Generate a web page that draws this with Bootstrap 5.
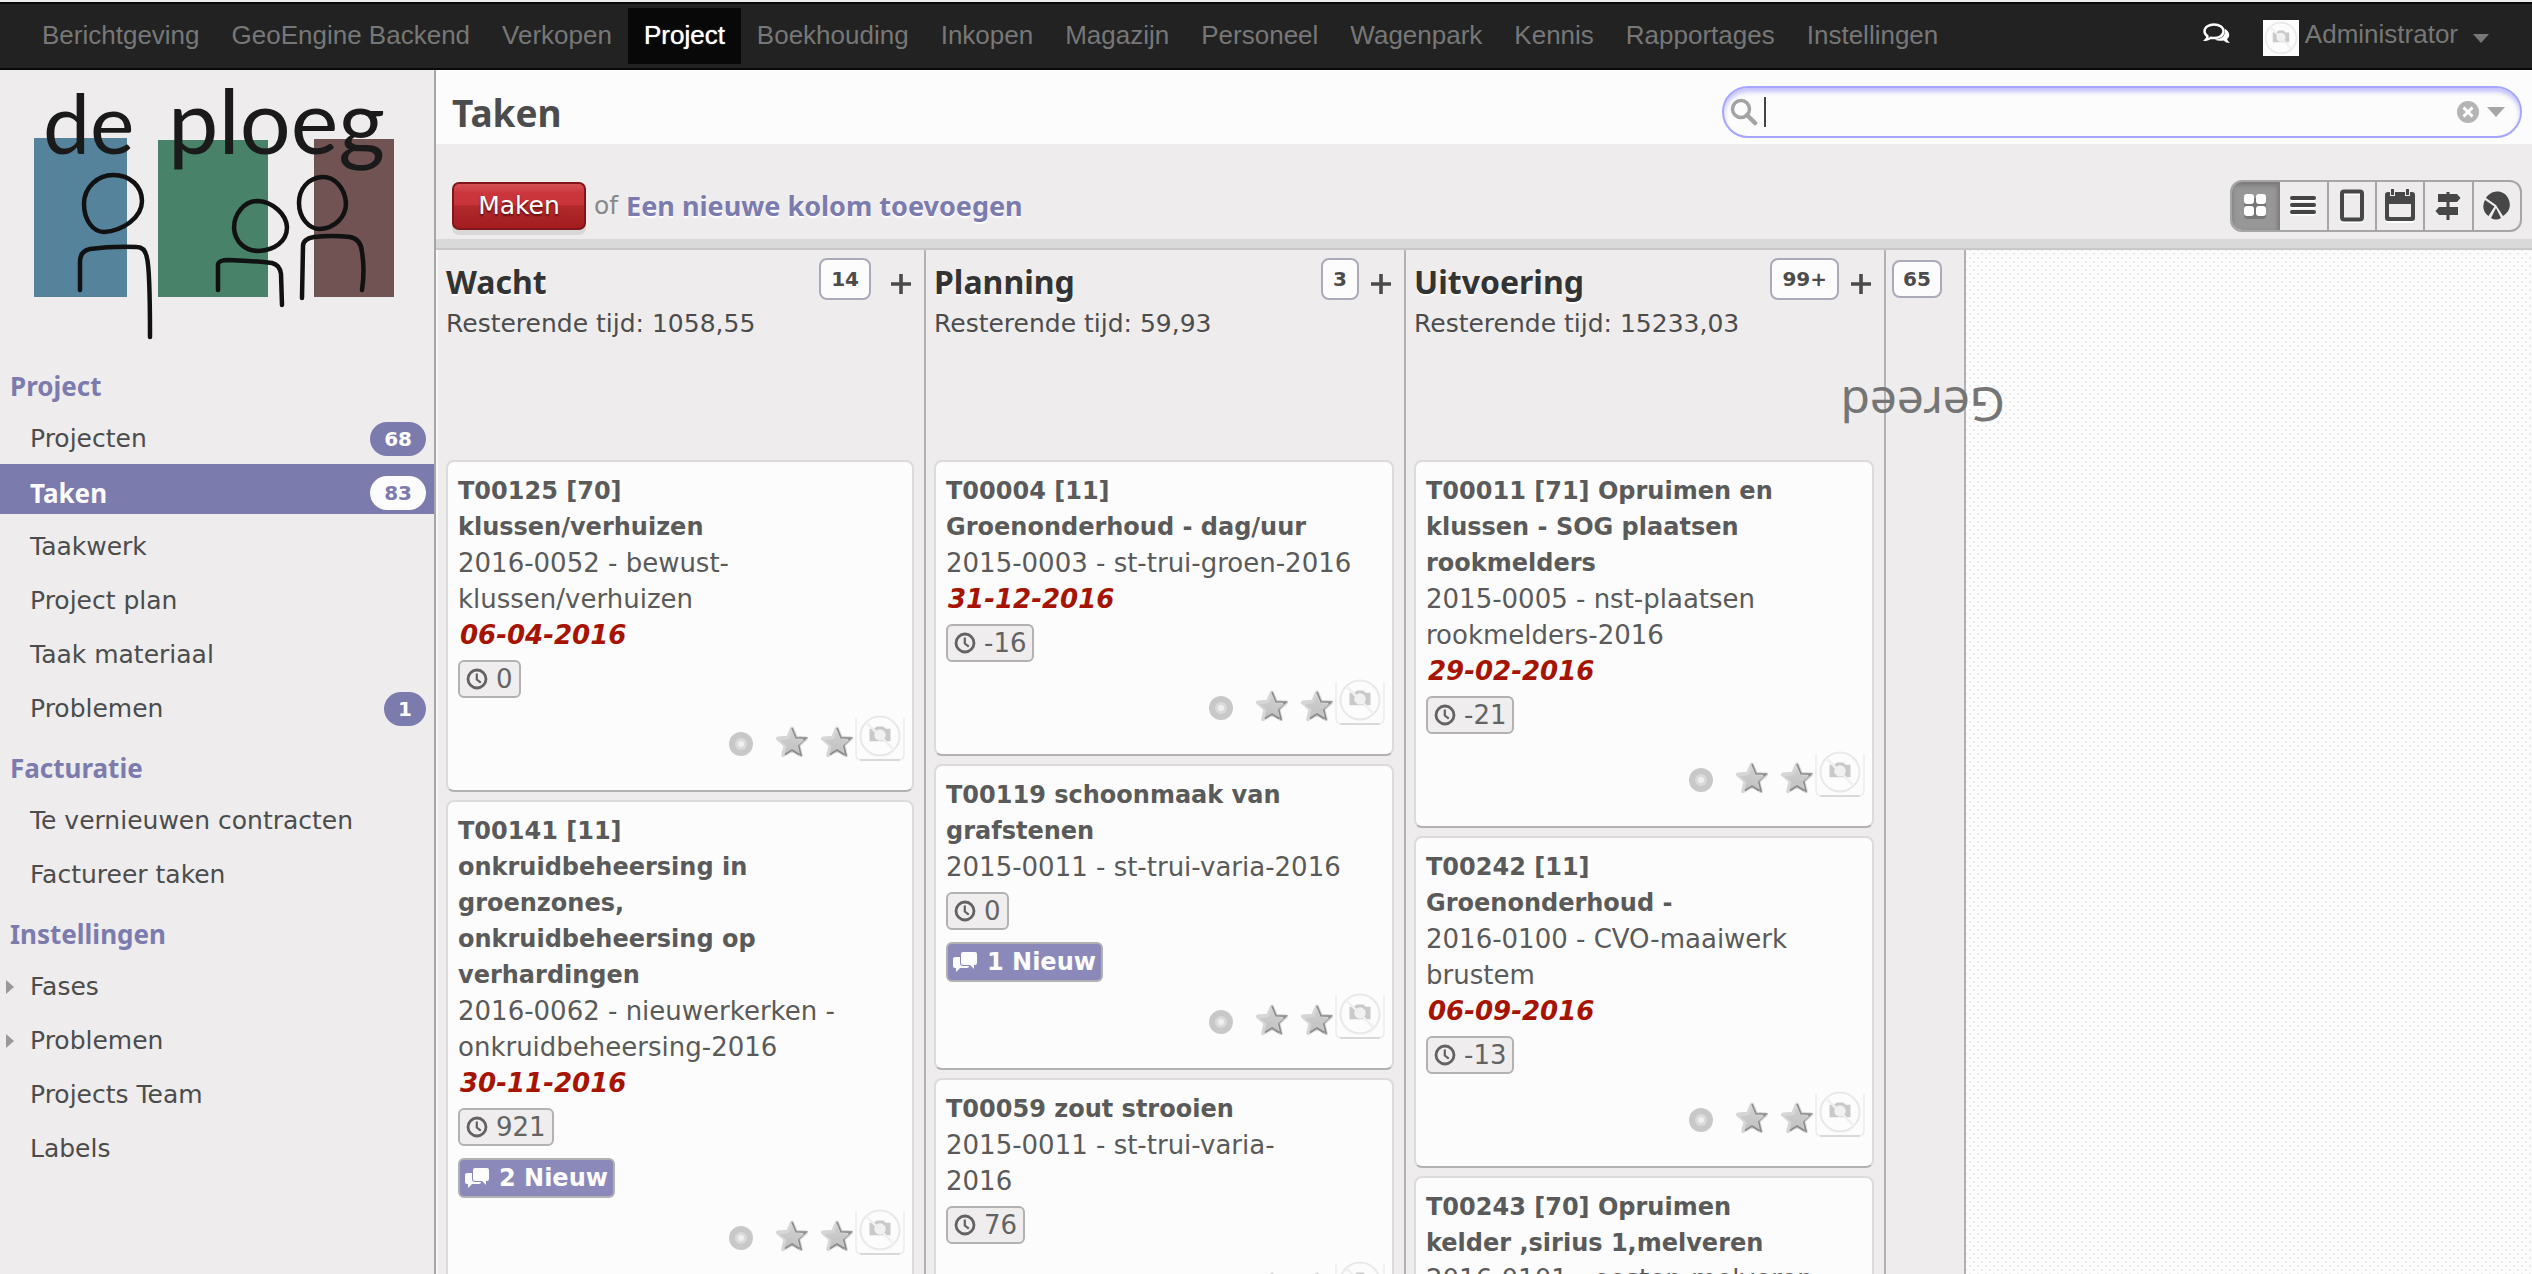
<!DOCTYPE html>
<html lang="nl">
<head>
<meta charset="utf-8">
<meta name="viewport" content="width=device-width, initial-scale=1">
<title>Taken</title>
<link href="https://cdn.jsdelivr.net/npm/bootstrap@5.3.0/dist/css/bootstrap.min.css" rel="stylesheet">
<style>
  :root{--ui:"DejaVu Sans",sans-serif;--head:"Noto Sans",sans-serif;--accent:#7c7bad;--panel:#eeeced;--paper:#fcfcfc;--ink:#4c4c4c}
  body{font-family:var(--ui);font-size:25px;line-height:36px;color:var(--ink);background:var(--panel)}
  .shell{height:100vh;overflow:hidden}
  a{text-decoration:none}

  .topnav{background:#222;border-top:2px solid #080808;border-bottom:2px solid #080808;height:68px;margin-top:2px;font-family:"Liberation Sans",sans-serif;font-size:26px;line-height:56px;padding:0 42px 0 26px;flex:none}
  .topnav .navbar-nav .nav-link{color:#777;padding:0 16px;height:56px;line-height:54px}
  .topnav .navbar-nav .nav-link.active{background:#080808;color:#fff;text-shadow:0 0 1px #fff}
  .userbtn{color:#777;gap:6px;line-height:52px}
  .userpic{width:36px;height:36px;background:var(--paper);margin-top:8px}
  .iconbtn{background:none;border:0;padding:0;line-height:0;color:inherit}

  .side{width:436px;border-right:2px solid #a6a6a6;flex:none}
  .side .logo{overflow:visible}
  .side h2{font-family:var(--head);font-weight:700;font-size:26px;line-height:36px;color:var(--accent);margin:0;padding:20px 0 2px 10px}
  .side .nav-link{color:var(--ink);margin-top:4px;padding:8px 8px 0 30px;height:50px;line-height:42px;font-size:25px}
  .side .nav-link.active{background:var(--accent);color:var(--paper);font-family:var(--head);font-weight:700;font-size:26px}
  .side .pill{font:700 20px/34px var(--ui);height:34px;padding:0 14px;border-radius:17px;background:var(--accent);color:#fff;margin-top:4px}
  .side .active .pill{background:var(--paper);color:var(--accent)}
  .side .twist{padding-left:6px}
  .side .twist svg{margin:0 16px 0 0}

  .titlebar{background:var(--paper);height:74px;padding:0 10px 0 16px;flex:none}
  .titlebar h1{font:700 37px/74px var(--head);margin:0;padding-top:6px;height:74px;line-height:74px}
  .searchbox{width:800px;height:52px;border:2px solid #a6a6fe;border-radius:26px;box-shadow:inset 0 4px 4px #c4c3fb;padding:0 15px 0 6px;margin-top:10px;background:var(--paper)}
  .searchbox input{border:0;border-left:2px solid #444;background:none;height:30px;outline:0;margin-left:6px}
  .toolbar{height:95px;padding:28px 10px 0 16px;flex:none}
  .strip{height:11px;background:#d9d9d9;border-bottom:2px solid #c9c8c9;flex:none}
  .maken{width:134px;height:48px;font-size:25px;line-height:40px;color:#fff;padding:0;border:2px solid #80161a;border-radius:7px;background:linear-gradient(#d45054,#ca343b 22%,#c9343a 47%,#b02a2c 50%,#a31c20);box-shadow:0 5px 0 #d9d8d9;text-shadow:0 2px 2px #601010}
  .toolbar .or{color:#888}
  .toolbar .addcol{font:700 27px/36px var(--head);color:var(--accent);text-shadow:0 2px 0 #fff}
  .viewset{border:2px solid #a6a6a6;border-radius:12px;overflow:hidden;height:52px;width:292px}
  .viewset button{flex:1 1 0;border:0;border-right:2px solid #a6a6a6;background:none;padding:0;line-height:0;color:#474747}
  .viewset button:last-child{border-right:0}
  .viewset button.active{background:#979797;box-shadow:inset 0 3px 5px #777;border-right-color:#808080}

  .board{background-color:var(--paper);background-image:conic-gradient(from 270deg at 2px 2px,#eaeaea 90deg,transparent 0),conic-gradient(from 270deg at 2px 2px,#eaeaea 90deg,transparent 0);background-size:8px 8px;background-position:5px 7px,1px 3px;overflow:hidden}
  .stage{width:480px;background:var(--panel);border-right:2px solid #b3b2b3;padding:0 10px 0 8px;flex:none}
  .stage.first{width:490px;padding-left:10px;box-shadow:inset 2px 0 0 #f8f8f8}
  .stage.folded{width:80px;padding:10px 6px}
  .stagehead{height:210px;padding:6px 3px 0 0}
  .stagehead h3{font:700 32px/36px var(--head);color:#333;text-shadow:0 2px 0 #fff;margin:0;padding-top:8px;height:50px}
  .tally{font:700 20px/34px var(--ui);border:2px solid #aaaab8;border-radius:8px;background:var(--paper);padding:0 10px;height:42px;line-height:38px;margin-top:2px}
  .folded .tally{height:38px;line-height:34px;margin:0;padding:0 9px;display:inline-block}
  .plus{margin:18px 0 0 12px}
  .first .plus{margin-left:20px}
  .vtitle{font:48px/50px var(--head);color:#757575;transform:rotate(180deg);width:164px;margin:82px 0 0 -51px}

  .task{border:2px solid #dcdbdc;border-bottom-color:#b3b2b3;border-radius:8px;background:var(--paper);padding:11px 7px 28px 10px;margin-bottom:8px;font-size:26px;color:#5a5a5a;white-space:nowrap}
  .task strong{font-size:24px}
  .task .due{font-size:26px;font-weight:700;font-style:italic;color:#a61300;padding-left:2px}
  .tags{gap:12px;padding-top:7px}
  .hours{border:2px solid #b3b2b3;border-radius:6px;background:#efedee;height:38px;padding:0 6px;gap:8px;line-height:38px;color:#636363}
  .hours:last-child{margin-bottom:6px}
  .fresh{border:2px solid #b1b0b3;border-radius:6px;background:#8a89ba;height:40px;padding:0 5px;gap:10px;color:var(--paper);font-weight:700;font-size:24px}
  .marks{margin-top:11px;height:47px}
  .marks .dot{margin:0 23px 6px 0}
  .marks .star{margin:0 13px 4px 0}
  .marks .star:nth-child(3){margin-right:2px}
</style>
<script src="https://cdn.jsdelivr.net/npm/bootstrap@5.3.0/dist/js/bootstrap.bundle.min.js"></script>
</head>
<body>
<svg width="0" height="0" class="position-absolute" aria-hidden="true">
  <defs>
    <linearGradient id="starfill" x1="0" y1="0" x2="0" y2="1"><stop offset="0" stop-color="#d0d0d0"/><stop offset="1" stop-color="#c0c0c0"/></linearGradient>
  </defs>
  <symbol id="clock" viewBox="0 0 22 22"><circle cx="11" cy="11" r="9" fill="none" stroke="#636363" stroke-width="2.8"/><path d="M10.8 5.5v6l4 3.2" fill="none" stroke="#636363" stroke-width="2.2"/></symbol>
  <symbol id="dot" viewBox="0 0 24 24"><circle cx="12" cy="12" r="12" fill="#c8c8c8"/><circle cx="12" cy="12" r="6" fill="#dadada"/><circle cx="12" cy="12" r="3" fill="#f0f0f0"/></symbol>
  <symbol id="star" viewBox="0 0 32 32"><path d="M16 2.500l4 9.300 10 .8-7.600 6.600 2.400 9.900L16 23.800l-8.800 5.300 2.400-9.900L2 12.600l10-.8z" fill="#a4a4a4" stroke="#d6d6d6" stroke-width="4" stroke-linejoin="round"/><path d="M16 2l4 9.800 10 .3-7.400 7 2.400 9.900L16 23.800" fill="none" stroke="#8a8a8a" stroke-width="1.600"/><path d="M16 5l3.400 8.500 8.900.7-6.800 5.900 2.100 8.900L16 24.100 8.400 29l2.100-8.900-6.800-5.900 8.900-.7z" fill="url(#starfill)"/><path d="M9 28.500l7-4.500 7 4.500" fill="none" stroke="#8a8a8a" stroke-width="1.500"/></symbol>
  <symbol id="nopic" viewBox="0 0 44 44"><path d="M11 14.500h5l2.500-2.500h7l2.500 2.500h5v13H11z" fill="#c9c9c9"/><circle cx="22" cy="21" r="6" fill="#f1f1f1"/><circle cx="22" cy="22" r="20.500" fill="none" stroke="#e9e9e9" stroke-width="2.200"/><path d="M7.500 7.500l29 29" stroke="#f0f0f0" stroke-width="2.600"/></symbol>
  <symbol id="face" viewBox="0 0 50 47"><path d="M1 3v36q0 6 5 6h38q5 0 5-6V3" fill="none" stroke="#ebebeb" stroke-width="1.500"/><path d="M5 45h40" stroke="#d2d2d2" stroke-width="1.500"/><use href="#nopic" x="4" y="0" width="42" height="42"/></symbol>
  <symbol id="talk" viewBox="0 0 24 22"><path d="M10 1h12q2 0 2 2v9q0 2-2 2h-1v4l-4-4h-7q-2 0-2-2V3q0-2 2-2z" fill="#fcfcfc"/><path d="M7 6H2Q0 6 0 8v7q0 2 2 2h1v4l4-4h7q2 0 2-2h-6q-3 0-3-3z" fill="#fcfcfc"/></symbol>
  <symbol id="plus" viewBox="0 0 20 20"><path d="M10 0v20M0 10h20" stroke="#4a4a4a" stroke-width="3.600"/></symbol>
</svg>

<div class="shell d-flex flex-column">
  <nav class="topnav navbar navbar-expand d-flex align-items-start flex-nowrap" aria-label="Hoofdmenu">
    <div class="navbar-nav me-auto pt-1">
      <a class="nav-link" href="#">Berichtgeving</a><a class="nav-link" href="#">GeoEngine Backend</a><a class="nav-link" href="#">Verkopen</a><a class="nav-link active" aria-current="page" href="#">Project</a><a class="nav-link" href="#">Boekhouding</a><a class="nav-link" href="#">Inkopen</a><a class="nav-link" href="#">Magazijn</a><a class="nav-link" href="#">Personeel</a><a class="nav-link" href="#">Wagenpark</a><a class="nav-link" href="#">Kennis</a><a class="nav-link" href="#">Rapportages</a><a class="nav-link" href="#">Instellingen</a>
    </div>
    <div class="d-flex align-items-center pt-1">
      <button class="iconbtn me-4" type="button" aria-label="Berichten"><svg width="28" height="24" viewBox="0 0 28 24"><path d="M21.500 6.500c4 2 7 7 2.500 10.500q.5 2 3 4-4 0-6.500-2.500-5 1-9-1c7-.5 12-4 10-11z" fill="#fff"/><path d="M11 2.500c5 0 9.500 2.700 9.500 6.800S16 16 11 16q-1.500 0-3-.3-2 1.800-5 2 1.500-1.500 1.500-3.500C2.500 13 1.500 11.200 1.500 9.300 1.500 5.200 6 2.500 11 2.500z" fill="#222" stroke="#fff" stroke-width="2.400"/></svg></button>
      <a class="userbtn d-flex align-items-center ms-2" href="#"><span class="userpic d-flex"><svg width="36" height="36" viewBox="-2 -2 48 48"><use href="#nopic" width="44" height="44"/></svg></span>Administrator<svg class="ms-2 mt-2" width="18" height="9" viewBox="0 0 18 9"><path d="M1 0h16L9 9z" fill="#777"/></svg></a>
    </div>
  </nav>

  <div class="d-flex flex-grow-1 overflow-hidden">
    <aside class="side">
      <svg class="logo d-block" width="434" height="278" viewBox="0 0 434 278" role="img" aria-label="de ploeg">
        <rect x="34" y="68" width="93" height="159" fill="#55839b"/><rect x="158" y="70" width="110" height="157" fill="#478269"/><rect x="314" y="69" width="80" height="158" fill="#705352"/>
        <g font-family="Lato, sans-serif" font-weight="400" font-size="84" fill="#1a1a1a"><text x="43" y="84">de</text><text x="168" y="84" font-size="90">ploeg</text></g>
        <g fill="none" stroke="#111" stroke-width="4.500" stroke-linecap="round">
          <path d="M113 105C98 105 84 117 84 134C84 150 93 162 104 162C122 161 142 148 142 131C142 117 131 105 113 105z"/>
          <path d="M80 220V192Q80 181 90 179Q112 176 137 177Q145 177 147 188Q150 200 150 267"/>
          <path d="M258 131C244 131 234 144 234 158C235 172 245 181 259 181C274 180 287 172 287 157C286 144 273 132 258 131z"/>
          <path d="M218 220V194Q219 190 229 190Q255 191 272 193Q280 195 281 204L282 235"/>
          <path d="M322 107C308 108 299 119 299 133C299 148 309 159 320 159C335 158 346 147 346 133C345 118 334 106 322 107z"/>
          <path d="M302 228L303 176Q303 169 314 167Q332 165 350 167Q361 169 362 182Q365 200 362 220"/>
        </g>
      </svg>
      <h2>Project</h2>
      <nav class="nav flex-column flex-nowrap" aria-label="Project">
        <a class="nav-link d-flex justify-content-between" href="#">Projecten<span class="pill">68</span></a>
        <a class="nav-link d-flex justify-content-between active" aria-current="page" href="#">Taken<span class="pill">83</span></a>
        <a class="nav-link" href="#">Taakwerk</a><a class="nav-link" href="#">Project plan</a><a class="nav-link" href="#">Taak materiaal</a>
        <a class="nav-link d-flex justify-content-between" href="#">Problemen<span class="pill">1</span></a>
      </nav>
      <h2>Facturatie</h2>
      <nav class="nav flex-column flex-nowrap" aria-label="Facturatie"><a class="nav-link" href="#">Te vernieuwen contracten</a><a class="nav-link" href="#">Factureer taken</a></nav>
      <h2>Instellingen</h2>
      <nav class="nav flex-column flex-nowrap" aria-label="Instellingen">
        <a class="nav-link twist d-flex align-items-center" href="#"><svg width="8" height="14" viewBox="0 0 8 14"><path d="M0 0l8 7-8 7z" fill="#999"/></svg>Fases</a>
        <a class="nav-link twist d-flex align-items-center" href="#"><svg width="8" height="14" viewBox="0 0 8 14"><path d="M0 0l8 7-8 7z" fill="#999"/></svg>Problemen</a>
        <a class="nav-link" href="#">Projects Team</a><a class="nav-link" href="#">Labels</a>
      </nav>
    </aside>

    <main class="d-flex flex-column flex-grow-1 overflow-hidden">
      <header class="titlebar d-flex justify-content-between align-items-center">
        <h1>Taken</h1>
        <form class="searchbox d-flex align-items-center" role="search">
          <svg width="28" height="28" viewBox="0 0 28 28"><circle cx="11" cy="11" r="8.500" fill="none" stroke="#a3a3a3" stroke-width="3.500"/><path d="M17 17l8 8" stroke="#a3a3a3" stroke-width="4.500" stroke-linecap="round"/></svg>
          <input class="flex-grow-1" type="text" aria-label="Zoeken">
          <button class="iconbtn" type="button" aria-label="Wissen"><svg width="22" height="22" viewBox="0 0 22 22"><circle cx="11" cy="11" r="11" fill="#b5b5b5"/><path d="M6.500 6.500l9 9M15.500 6.500l-9 9" stroke="#fff" stroke-width="3"/></svg></button>
          <button class="iconbtn ms-2" type="button" aria-label="Geavanceerd zoeken"><svg width="18" height="10" viewBox="0 0 18 10"><path d="M0 0h18l-9 10z" fill="#a6a6a6"/></svg></button>
        </form>
      </header>
      <div class="toolbar d-flex justify-content-between align-items-center">
        <div class="d-flex align-items-center">
          <button class="maken btn" type="button">Maken</button>
          <span class="or mx-2">of</span><a class="addcol" href="#">Een nieuwe kolom toevoegen</a>
        </div>
        <div class="viewset d-flex" role="group" aria-label="Weergave">
          <button class="active" type="button" aria-label="Kanban"><svg width="26" height="26" viewBox="0 0 26 26"><g fill="#777" transform="translate(0 3)"><rect x="2" y="2" width="22" height="21" rx="4"/></g><g fill="#fff"><rect x="2" y="1" width="10" height="10" rx="3"/><rect x="14" y="1" width="10" height="10" rx="3"/><rect x="2" y="13" width="10" height="10" rx="3"/><rect x="14" y="13" width="10" height="10" rx="3"/></g></svg></button>
          <button type="button" aria-label="Lijst"><svg width="26" height="22" viewBox="0 0 26 22"><path d="M1 4.500h24M1 11.500h24M1 18.500h24" stroke="#fff" stroke-width="4"/><path d="M2 3h22M2 10h22M2 17h22" stroke="#444" stroke-width="4" stroke-linecap="round"/></svg></button>
          <button type="button" aria-label="Formulier"><svg width="26" height="34" viewBox="0 0 26 34"><rect x="3" y="4" width="20" height="28" rx="2" fill="none" stroke="#fff" stroke-width="4"/><rect x="3" y="2.500" width="20" height="28" rx="2" fill="none" stroke="#474747" stroke-width="4"/></svg></button>
          <button type="button" aria-label="Kalender"><svg width="32" height="34" viewBox="0 0 32 34"><path d="M2 33h28" stroke="#fff" stroke-width="2"/><path d="M7 0h3v6H7zM22 0h3v6h-3z" fill="#474747"/><path d="M4 3h2v4h5V3h10v4h5V3h2q3 0 3 3v23q0 3-3 3H4q-3 0-3-3V6q0-3 3-3zM5 15v12q0 1 1 1h20q1 0 1-1V15z" fill-rule="evenodd" fill="#474747"/></svg></button>
          <button type="button" aria-label="Gantt"><svg width="26" height="30" viewBox="0 0 26 30" fill="#474747"><path d="M11.500 1h3v28h-3z"/><path d="M3 3h19l3.500 4L22 11H3zM23 16H4L.5 20 4 24h19z"/></svg></button>
          <button type="button" aria-label="Grafiek"><svg width="30" height="32" viewBox="0 0 30 32" fill="#474747"><path d="M14 15L4 8C10-1 22 0 26 8c4 8 1 14-5 18z"/><path d="M12.500 16.500L3 10C0 16 1 22 6.500 26zM14 18l-5 10q5 3 10 0z"/></svg></button>
        </div>
      </div>
      <div class="strip"></div>

      <div class="board d-flex flex-grow-1">
        <section class="stage first">
          <div class="stagehead">
            <div class="d-flex align-items-start"><h3 class="me-auto">Wacht</h3><span class="tally">14</span><button class="iconbtn plus" type="button" aria-label="Toevoegen aan Wacht"><svg width="20" height="20"><use href="#plus"/></svg></button></div>
            <div class="remain">Resterende tijd: 1058,55</div>
          </div>
          <article class="card task"><strong>T00125 [70]<br>klussen/verhuizen</strong><div>2016-0052 - bewust-<br>klussen/verhuizen</div><div class="due">06-04-2016</div>
            <div class="tags d-flex flex-column align-items-start"><span class="hours d-flex align-items-center"><svg width="22" height="22"><use href="#clock"/></svg>0</span></div>
            <div class="marks d-flex justify-content-end align-items-end"><button class="iconbtn dot" type="button" aria-label="Status"><svg width="24" height="24"><use href="#dot"/></svg></button><button class="iconbtn star" type="button" aria-label="Prioriteit 1"><svg width="32" height="32"><use href="#star"/></svg></button><button class="iconbtn star" type="button" aria-label="Prioriteit 2"><svg width="32" height="32"><use href="#star"/></svg></button><svg width="50" height="47"><use href="#face"/></svg></div></article>
          <article class="card task"><strong>T00141 [11]<br>onkruidbeheersing in<br>groenzones,<br>onkruidbeheersing op<br>verhardingen</strong><div>2016-0062 - nieuwerkerken -<br>onkruidbeheersing-2016</div><div class="due">30-11-2016</div>
            <div class="tags d-flex flex-column align-items-start"><span class="hours d-flex align-items-center"><svg width="22" height="22"><use href="#clock"/></svg>921</span><span class="fresh d-flex align-items-center"><svg width="24" height="22"><use href="#talk"/></svg>2 Nieuw</span></div>
            <div class="marks d-flex justify-content-end align-items-end"><button class="iconbtn dot" type="button" aria-label="Status"><svg width="24" height="24"><use href="#dot"/></svg></button><button class="iconbtn star" type="button" aria-label="Prioriteit 1"><svg width="32" height="32"><use href="#star"/></svg></button><button class="iconbtn star" type="button" aria-label="Prioriteit 2"><svg width="32" height="32"><use href="#star"/></svg></button><svg width="50" height="47"><use href="#face"/></svg></div></article>
        </section>

        <section class="stage">
          <div class="stagehead">
            <div class="d-flex align-items-start"><h3 class="me-auto">Planning</h3><span class="tally">3</span><button class="iconbtn plus" type="button" aria-label="Toevoegen aan Planning"><svg width="20" height="20"><use href="#plus"/></svg></button></div>
            <div class="remain">Resterende tijd: 59,93</div>
          </div>
          <article class="card task"><strong>T00004 [11]<br>Groenonderhoud - dag/uur</strong><div>2015-0003 - st-trui-groen-2016</div><div class="due">31-12-2016</div>
            <div class="tags d-flex flex-column align-items-start"><span class="hours d-flex align-items-center"><svg width="22" height="22"><use href="#clock"/></svg>-16</span></div>
            <div class="marks d-flex justify-content-end align-items-end"><button class="iconbtn dot" type="button" aria-label="Status"><svg width="24" height="24"><use href="#dot"/></svg></button><button class="iconbtn star" type="button" aria-label="Prioriteit 1"><svg width="32" height="32"><use href="#star"/></svg></button><button class="iconbtn star" type="button" aria-label="Prioriteit 2"><svg width="32" height="32"><use href="#star"/></svg></button><svg width="50" height="47"><use href="#face"/></svg></div></article>
          <article class="card task"><strong>T00119 schoonmaak van<br>grafstenen</strong><div>2015-0011 - st-trui-varia-2016</div>
            <div class="tags d-flex flex-column align-items-start"><span class="hours d-flex align-items-center"><svg width="22" height="22"><use href="#clock"/></svg>0</span><span class="fresh d-flex align-items-center"><svg width="24" height="22"><use href="#talk"/></svg>1 Nieuw</span></div>
            <div class="marks d-flex justify-content-end align-items-end"><button class="iconbtn dot" type="button" aria-label="Status"><svg width="24" height="24"><use href="#dot"/></svg></button><button class="iconbtn star" type="button" aria-label="Prioriteit 1"><svg width="32" height="32"><use href="#star"/></svg></button><button class="iconbtn star" type="button" aria-label="Prioriteit 2"><svg width="32" height="32"><use href="#star"/></svg></button><svg width="50" height="47"><use href="#face"/></svg></div></article>
          <article class="card task"><strong>T00059 zout strooien</strong><div>2015-0011 - st-trui-varia-<br>2016</div>
            <div class="tags d-flex flex-column align-items-start"><span class="hours d-flex align-items-center"><svg width="22" height="22"><use href="#clock"/></svg>76</span></div>
            <div class="marks d-flex justify-content-end align-items-end"><button class="iconbtn dot" type="button" aria-label="Status"><svg width="24" height="24"><use href="#dot"/></svg></button><button class="iconbtn star" type="button" aria-label="Prioriteit 1"><svg width="32" height="32"><use href="#star"/></svg></button><button class="iconbtn star" type="button" aria-label="Prioriteit 2"><svg width="32" height="32"><use href="#star"/></svg></button><svg width="50" height="47"><use href="#face"/></svg></div></article>
        </section>

        <section class="stage">
          <div class="stagehead">
            <div class="d-flex align-items-start"><h3 class="me-auto">Uitvoering</h3><span class="tally">99+</span><button class="iconbtn plus" type="button" aria-label="Toevoegen aan Uitvoering"><svg width="20" height="20"><use href="#plus"/></svg></button></div>
            <div class="remain">Resterende tijd: 15233,03</div>
          </div>
          <article class="card task"><strong>T00011 [71] Opruimen en<br>klussen - SOG plaatsen<br>rookmelders</strong><div>2015-0005 - nst-plaatsen<br>rookmelders-2016</div><div class="due">29-02-2016</div>
            <div class="tags d-flex flex-column align-items-start"><span class="hours d-flex align-items-center"><svg width="22" height="22"><use href="#clock"/></svg>-21</span></div>
            <div class="marks d-flex justify-content-end align-items-end"><button class="iconbtn dot" type="button" aria-label="Status"><svg width="24" height="24"><use href="#dot"/></svg></button><button class="iconbtn star" type="button" aria-label="Prioriteit 1"><svg width="32" height="32"><use href="#star"/></svg></button><button class="iconbtn star" type="button" aria-label="Prioriteit 2"><svg width="32" height="32"><use href="#star"/></svg></button><svg width="50" height="47"><use href="#face"/></svg></div></article>
          <article class="card task"><strong>T00242 [11]<br>Groenonderhoud -</strong><div>2016-0100 - CVO-maaiwerk<br>brustem</div><div class="due">06-09-2016</div>
            <div class="tags d-flex flex-column align-items-start"><span class="hours d-flex align-items-center"><svg width="22" height="22"><use href="#clock"/></svg>-13</span></div>
            <div class="marks d-flex justify-content-end align-items-end"><button class="iconbtn dot" type="button" aria-label="Status"><svg width="24" height="24"><use href="#dot"/></svg></button><button class="iconbtn star" type="button" aria-label="Prioriteit 1"><svg width="32" height="32"><use href="#star"/></svg></button><button class="iconbtn star" type="button" aria-label="Prioriteit 2"><svg width="32" height="32"><use href="#star"/></svg></button><svg width="50" height="47"><use href="#face"/></svg></div></article>
          <article class="card task"><strong>T00243 [70] Opruimen<br>kelder ,sirius 1,melveren</strong><div>2016-0101 - oosten-melveren</div></article>
        </section>

        <section class="stage folded">
          <span class="tally">65</span>
          <div class="vtitle">Gereed</div>
        </section>
      </div>
    </main>
  </div>
</div>
</body>
</html>
